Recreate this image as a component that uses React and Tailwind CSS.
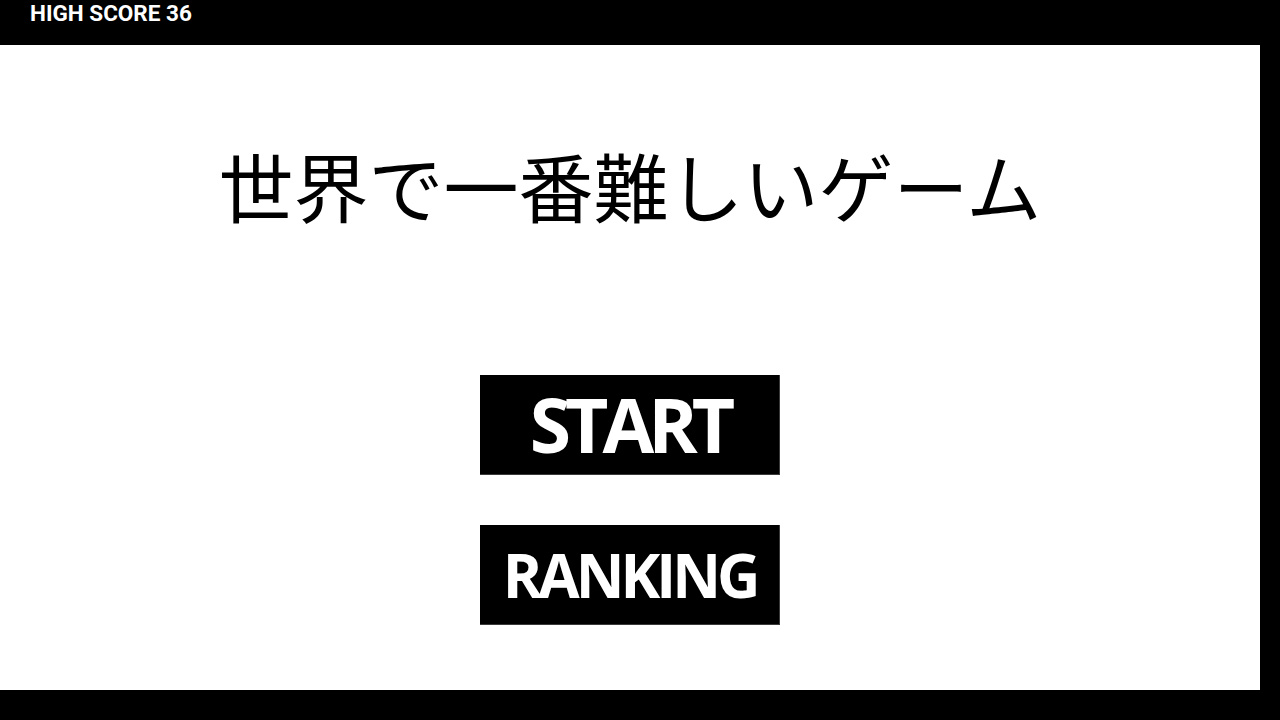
export default function App() {
  return (
    <div className="w-[1280px] h-[720px] bg-black flex flex-col overflow-hidden">
      {/* top bar */}
      <div className="h-[45px] shrink-0 pl-[30px] pt-[2px]">
        <span
          className="text-white text-[22.5px] leading-[23px] font-bold"
          style={{ fontFamily: 'Roboto, "Liberation Sans", sans-serif' }}
        >
          HIGH SCORE 36
        </span>
      </div>

      <div className="flex h-[645px] shrink-0">
        {/* game screen */}
        <div className="w-[1260px] h-full bg-white flex flex-col items-center pt-[102px]">
          <h1
            className="text-black text-[75px] leading-[75px] font-normal text-center"
            style={{ fontFamily: '"Noto Sans CJK JP", "Noto Sans", sans-serif' }}
          >
            世界で一番難しいゲーム
          </h1>

          <button
            className="mt-[153px] w-[300px] h-[100px] bg-black border-r border-b border-[#3a3a3a] flex items-center justify-center text-white font-bold text-[75px] leading-none tracking-[-6px]"
            style={{ fontFamily: '"Open Sans", "Liberation Sans", sans-serif' }}
          >
            START
          </button>

          <button
            className="mt-[50px] w-[300px] h-[100px] bg-black border-r border-b border-[#3a3a3a] flex items-center justify-center text-white font-bold text-[60px] leading-none tracking-[-4px]"
            style={{ fontFamily: '"Open Sans", "Liberation Sans", sans-serif' }}
          >
            RANKING
          </button>
        </div>
        <div className="flex-1 bg-black" />
      </div>

      <div className="flex-1 bg-black" />
    </div>
  )
}
